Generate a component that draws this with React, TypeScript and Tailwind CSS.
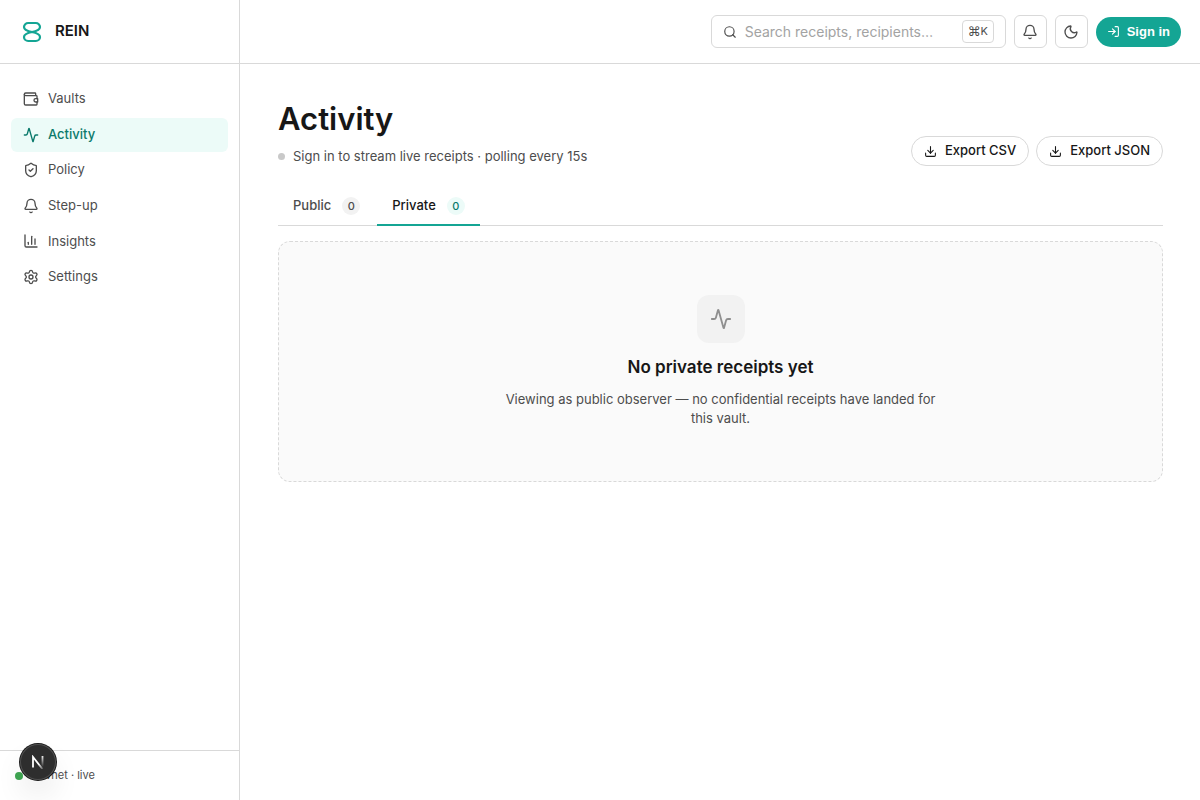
import React from 'react';
import {
  Activity,
  Bell,
  ChartColumn,
  Download,
  LogIn,
  Moon,
  Search,
  Settings,
  ShieldCheck,
} from 'lucide-react';

const WalletIcon = ({ size = 16 }: { size?: number }) => (
  <svg
    width={size}
    height={size}
    viewBox="0 0 24 24"
    fill="none"
    stroke="currentColor"
    strokeWidth="2"
    strokeLinecap="round"
    strokeLinejoin="round"
    aria-hidden="true"
  >
    <path d="M19 7V4a1 1 0 0 0-1-1H4a2 2 0 0 0 0 4h16a1 1 0 0 1 1 1v3.500" />
    <path d="M2 5v14a2 2 0 0 0 2 2h16a1 1 0 0 0 1-1v-3.500" />
    <path d="M22 11.500h-3a2.500 2.500 0 0 0 0 5h3Z" />
  </svg>
);

const navItems = [
  { icon: WalletIcon, label: 'Vaults', active: false },
  { icon: Activity, label: 'Activity', active: true },
  { icon: ShieldCheck, label: 'Policy', active: false },
  { icon: Bell, label: 'Step-up', active: false },
  { icon: ChartColumn, label: 'Insights', active: false },
  { icon: Settings, label: 'Settings', active: false },
];

const tabs = [
  { label: 'Public', count: 0, active: false },
  { label: 'Private', count: 0, active: true },
];

const Logo = () => (
  <svg width="20" height="22" viewBox="0 0 20 22" fill="none" stroke="#14a594" strokeWidth="2.2" aria-hidden="true">
    <path d="M10 11C5 10 2 9 2 6A4.200 4 0 0 1 6.200 2h7.600A4.200 4 0 0 1 18 6C18 9 15 10 10 11Z" />
    <path d="M10 11c-5 1-8 2-8 5a4.200 4 0 0 0 4.200 4h7.600a4.200 4 0 0 0 4.200-4c0-3-3-4-8-5Z" />
  </svg>
);

const Sidebar = () => (
  <aside className="flex w-60 shrink-0 flex-col border-r border-[#d9d9d9]">
    <div className="flex h-16 items-center gap-[13px] border-b border-[#d9d9d9] px-[22px]">
      <Logo />
      <span className="text-[15px] font-semibold text-[#171717]">REIN</span>
    </div>
    <div className="flex-1 px-[11px] pt-[18px]">
      <nav className="flex h-[212px] flex-col justify-between">
        {navItems.map((item) => (
          <a
            key={item.label}
            href="#"
            className={`flex h-[34px] items-center gap-[9px] rounded-md px-3 text-[13px] ${
              item.active ? 'bg-[#ecfbf8] font-medium text-[#0b7a6c]' : 'text-[#4d4d4d]'
            }`}
          >
            <item.icon size={16} />
            {item.label}
          </a>
        ))}
      </nav>
    </div>
    <div className="flex h-[50px] items-center gap-2 border-t border-[#d9d9d9] px-[15px] text-[11px] text-[#4d4d4d]">
      <span className="size-2 rounded-full bg-[#3fa652]" />
      Devnet · live
    </div>
  </aside>
);

const TopBar = () => (
  <header className="flex h-16 items-center justify-end gap-2 border-b border-[#d9d9d9] pr-[19px]">
    <label className="flex h-[33px] w-[295px] items-center gap-2 rounded-md border border-[#d9d9d9] px-[11px]">
      <Search size={14} className="shrink-0 text-[#4d4d4d]" />
      <input
        type="text"
        aria-label="Search"
        placeholder="Search receipts, recipients…"
        className="min-w-0 flex-1 text-sm outline-none placeholder:text-[#a3a3a3]"
      />
      <kbd className="flex h-[23px] w-8 items-center justify-center rounded border border-[#d9d9d9] font-[Inter,sans-serif] text-[11px] text-[#4d4d4d]">
        <span className="font-['DejaVu_Sans',sans-serif] text-[13px]">⌘</span>K
      </kbd>
    </label>
    <button
      type="button"
      aria-label="Notifications"
      className="flex size-[33px] items-center justify-center rounded-md border border-[#d9d9d9] text-[#4d4d4d]"
    >
      <Bell size={16} />
    </button>
    <button
      type="button"
      aria-label="Toggle theme"
      className="flex size-[33px] items-center justify-center rounded-md border border-[#d9d9d9] text-[#4d4d4d]"
    >
      <Moon size={16} />
    </button>
    <button
      type="button"
      className="flex h-[30px] items-center gap-[7px] rounded-full bg-[#14a594] px-[11px] font-['Liberation_Sans',sans-serif] text-[13px] font-bold text-white"
    >
      <LogIn size={13} />
      Sign in
    </button>
  </header>
);

const ExportButton = ({ label }: { label: string }) => (
  <button
    type="button"
    className="flex h-[30px] items-center gap-2 rounded-full border border-[#d9d9d9] px-3 text-[13px] font-medium text-[#171717]"
  >
    <Download size={13} />
    {label}
  </button>
);

const DevBadge = () => (
  <button
    type="button"
    aria-label="Open dev tools"
    className="fixed bottom-5 left-5 flex size-9 items-center justify-center rounded-full bg-[#2e2e2e] shadow-[0_0_0_1px_#171717,inset_0_0_0_1px_#505050,0_16px_32px_-8px_rgba(0,0,0,0.24)]"
  >
    <svg width="14" height="14" viewBox="0 0 14 14" fill="none" strokeWidth="1.8" aria-hidden="true">
      <defs>
        <linearGradient id="stem" x1="0" y1="0" x2="0" y2="14" gradientUnits="userSpaceOnUse">
          <stop stopColor="#fff" />
          <stop offset="0.85" stopColor="#fff" stopOpacity="0" />
        </linearGradient>
        <linearGradient id="slash" x1="8" y1="9" x2="12" y2="14" gradientUnits="userSpaceOnUse">
          <stop stopColor="#fff" />
          <stop offset="1" stopColor="#fff" stopOpacity="0.2" />
        </linearGradient>
      </defs>
      <path d="M2 12.500V2l9.500 12" stroke="url(#slash)" />
      <path d="M11.500 1v11.500" stroke="url(#stem)" />
    </svg>
  </button>
);

const App = () => {
  return (
    <div className="flex min-h-screen bg-white font-[Inter,sans-serif] text-[#171717]">
      <Sidebar />

      <div className="min-w-0 flex-1">
        <TopBar />

        <main className="pt-8 pr-[37px] pl-[38px]">
          <div className="flex items-end justify-between">
            <div>
              <h1 className="text-[31px] leading-[46px] font-semibold">Activity</h1>
              <p className="mt-1 flex items-center gap-2 text-[13px] leading-5 text-[#4d4d4d]">
                <span className="size-[7px] rounded-full bg-[#c9c9c9]" />
                Sign in to stream live receipts · polling every 15s
              </p>
            </div>
            <div className="flex gap-[7px]">
              <ExportButton label="Export CSV" />
              <ExportButton label="Export JSON" />
            </div>
          </div>

          <div role="tablist" className="mt-5 flex gap-0.5 border-b border-[#d9d9d9]">
            {tabs.map((tab) => (
              <button
                key={tab.label}
                type="button"
                role="tab"
                aria-selected={tab.active}
                className={`-mb-px flex h-10 items-center gap-[11px] border-b-2 px-[15px] pt-0.5 text-[13px] font-medium ${
                  tab.active ? 'border-[#14a594] text-[#171717]' : 'border-transparent text-[#4d4d4d]'
                }`}
              >
                {tab.label}
                <span
                  className={`flex size-[18px] items-center justify-center rounded-full text-[11px] ${
                    tab.active ? 'bg-[#ecfbf8] text-[#0b7a6c]' : 'bg-[#f2f2f2] text-[#4d4d4d]'
                  }`}
                >
                  {tab.count}
                </span>
              </button>
            ))}
          </div>

          <section className="mt-[15px] flex flex-col items-center rounded-xl border border-dashed border-[#d9d9d9] bg-[#fafafa] py-[53px] text-center">
            <div className="flex size-12 items-center justify-center rounded-xl bg-[#f2f2f2] text-[#8f8f8f]">
              <Activity size={22} />
            </div>
            <h2 className="mt-3 text-[17px] leading-6 font-semibold">No private receipts yet</h2>
            <p className="mt-[11px] max-w-[440px] text-[13px] leading-[19px] text-[#4d4d4d]">
              Viewing as public observer — no confidential receipts have landed for this vault.
            </p>
          </section>
        </main>
      </div>

      <DevBadge />
    </div>
  );
};

export default App;
